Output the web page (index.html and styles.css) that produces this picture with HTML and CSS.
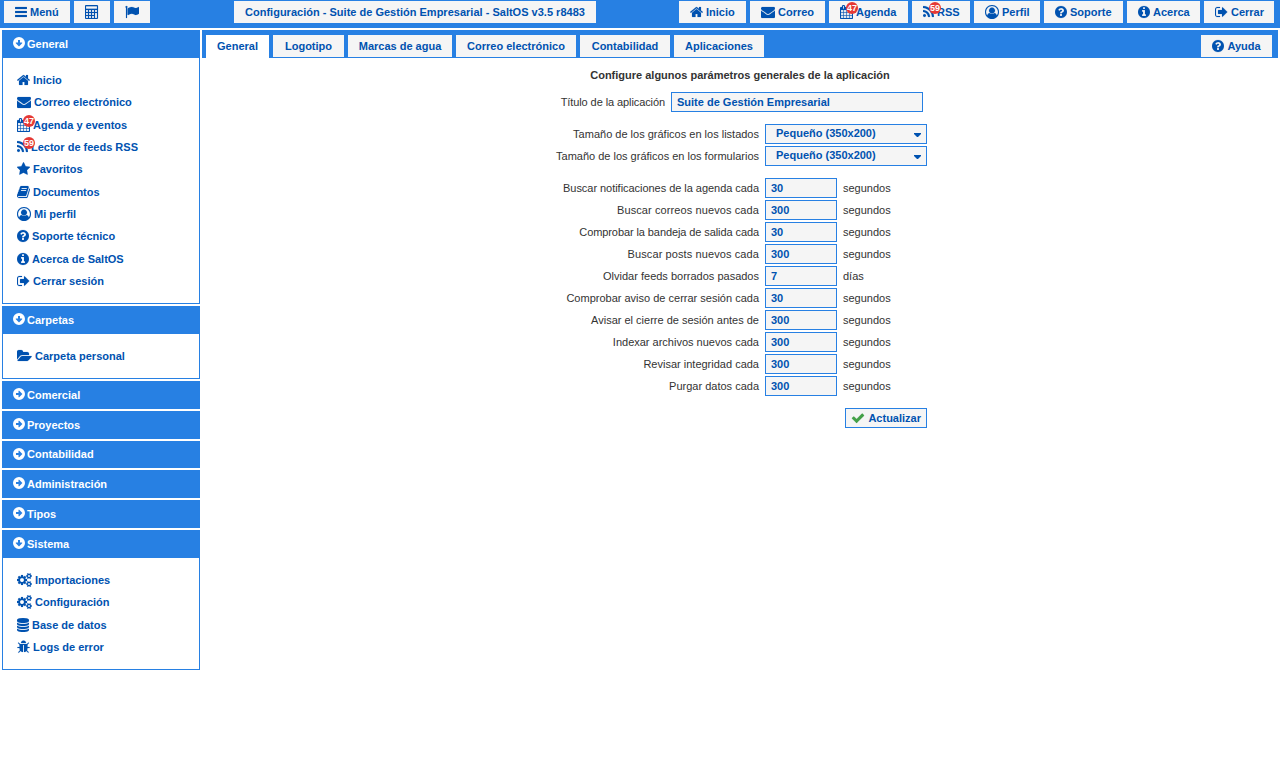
FILE: index.html
```html
<!DOCTYPE html>
<html lang="es">
<head>
<meta charset="utf-8">
<title>Configuración - Suite de Gestión Empresarial - SaltOS</title>
<link rel="stylesheet" href="styles.css">
</head>
<body>
<svg class="defs" width="0" height="0" aria-hidden="true">
<symbol id="bars" viewBox="128 0 1536 1792"><path d="M1664 1344v128q0 26-19 45t-45 19h-1408q-26 0-45-19t-19-45v-128q0-26 19-45t45-19h1408q26 0 45 19t19 45zm0-512v128q0 26-19 45t-45 19h-1408q-26 0-45-19t-19-45v-128q0-26 19-45t45-19h1408q26 0 45 19t19 45zm0-512v128q0 26-19 45t-45 19h-1408q-26 0-45-19t-19-45v-128q0-26 19-45t45-19h1408q26 0 45 19t19 45z"/></symbol>
<symbol id="calc" viewBox="0 0 1792 1792"><path fill-rule="evenodd" d="M128 0h1408q128 0 128 128v1536q0 128-128 128h-1408q-128 0-128-128v-1536q0-128 128-128zM128 160v320h1408v-320zM128 640h256v256h-256zM512 640h256v256h-256zM896 640h256v256h-256zM1280 640h256v256h-256zM128 1024h256v256h-256zM512 1024h256v256h-256zM896 1024h256v256h-256zM1280 1024h256v640h-256zM128 1408h256v256h-256zM512 1408h256v256h-256zM896 1408h256v256h-256z"/></symbol>
<symbol id="flag" viewBox="0 0 1792 1792"><path d="M320 256q0 72-64 110v1266q0 13-9.500 22.500t-22.500 9.500h-64q-13 0-22.500-9.500t-9.500-22.500v-1266q-64-38-64-110 0-53 37.500-90.500t90.500-37.500 90.500 37.500 37.500 90.500zm1472 64v763q0 25-12.500 38.500t-39.500 27.500q-215 116-369 116-61 0-123.500-22t-108.500-48-115.500-48-142.500-22q-192 0-464 146-17 9-33 9-26 0-45-19t-19-45v-742q0-32 31-55 21-14 79-43 236-120 421-120 107 0 200 29t219 88q38 19 88 19 54 0 117.500-21t110-47 88-47 54.500-21q26 0 45 19t19 45z"/></symbol>
<symbol id="home" viewBox="64 0 1664 1792"><path d="M1472 992v480q0 26-19 45t-45 19h-384v-384h-256v384h-384q-26 0-45-19t-19-45v-480q0-1 .5-3t.5-3l575-474 575 474q1 2 1 6zm223-69l-62 74q-8 9-21 11h-3q-13 0-21-7l-692-577-692 577q-12 8-24 7-13-2-21-11l-62-74q-8-10-7-23.500t11-21.500l719-599q32-26 76-26t76 26l244 204v-195q0-14 9-23t23-9h192q14 0 23 9t9 23v408l219 182q10 8 11 21.500t-7 23.500z"/></symbol>
<symbol id="mail" viewBox="0 0 1792 1792"><path d="M1792 710v794q0 66-47 113t-113 47h-1472q-66 0-113-47t-47-113v-794q44 49 101 87 362 246 497 345 57 42 92.500 65.500t94.500 48 110 24.500h2q51 0 110-24.500t94.500-48 92.500-65.500q170-123 498-345 57-39 100-87zm0-294q0 79-49 151t-122 123q-376 261-468 325-10 7-42.500 31t-54 38.500-52 32.500-57.500 27-50 9h-2q-23 0-50-9t-57.500-27-52-32.500-54-38.500-42.500-31q-91-64-262-182.500t-205-142.500q-62-42-117-115.500t-55-136.500q0-78 41.500-130t118.500-52h1472q65 0 112.500 47t47.500 113z"/></symbol>
<symbol id="cal" viewBox="64 0 1664 1792"><path d="M192 1664h288v-288h-288v288zm352 0h320v-288h-320v288zm-352-352h288v-320h-288v320zm352 0h320v-320h-320v320zm-352-384h288v-288h-288v288zm736 736h320v-288h-320v288zm-384-736h320v-288h-320v288zm768 736h288v-288h-288v288zm-384-352h320v-320h-320v320zm-352-864v-288q0-13-9.500-22.500t-22.500-9.500h-64q-13 0-22.500 9.500t-9.500 22.500v288q0 13 9.500 22.500t22.500 9.500h64q13 0 22.500-9.500t9.500-22.500zm736 864h288v-320h-288v320zm-384-384h320v-288h-320v288zm384 0h288v-288h-288v288zm32-480v-288q0-13-9.500-22.500t-22.500-9.500h-64q-13 0-22.500 9.500t-9.500 22.500v288q0 13 9.500 22.500t22.500 9.500h64q13 0 22.500-9.500t9.500-22.500zm384-64v1280q0 52-38 90t-90 38h-1408q-52 0-90-38t-38-90v-1280q0-52 38-90t90-38h128v-96q0-66 47-113t113-47h64q66 0 113 47t47 113v96h384v-96q0-66 47-113t113-47h64q66 0 113 47t47 113v96h128q52 0 90 38t38 90z"/></symbol>
<symbol id="rss" viewBox="192 0 1408 1792"><path d="M576 1344q0 80-56 136t-136 56-136-56-56-136 56-136 136-56 136 56 56 136zm512 123q2 28-17 48-18 21-47 21h-135q-25 0-43-16.500t-20-41.500q-22-229-184.500-391.500t-391.500-184.500q-25-2-41.500-20t-16.500-43v-135q0-29 21-47 17-17 43-17h5q160 13 306 80.500t259 181.500q114 113 181.500 259t80.500 306zm512 2q2 27-18 47-18 20-46 20h-143q-26 0-44.500-17.500t-19.500-42.500q-12-215-101-408.500t-231.500-336-336-231.500-408.500-102q-25-1-42.500-19.500t-17.500-43.500v-143q0-28 20-46 18-18 44-18h3q262 13 501.500 120t425.500 294q187 186 294 425.500t120 501.500z"/></symbol>
<symbol id="star" viewBox="64 0 1664 1792"><path d="M1728 647q0 22-26 48l-363 354 86 500q1 7 1 20 0 21-10.500 35.500t-30.500 14.500q-19 0-40-12l-449-236-449 236q-22 12-40 12-21 0-31.500-14.500t-10.500-35.500q0-6 2-20l86-500-364-354q-25-27-25-48 0-37 56-46l502-73 225-455q19-41 49-41t49 41l225 455 502 73q56 9 56 46z"/></symbol>
<symbol id="book" viewBox="64 0 1664 1792"><path d="M1703 478q40 57 18 129l-275 906q-19 64-76.500 107.500t-122.500 43.500h-923q-77 0-148.500-53.500t-99.500-131.500q-24-67-2-127 0-4 3-27t4-37q1-8-3-21.500t-3-19.500q2-11 8-21t16.500-23.500 16.500-23.500q23-38 45-91.500t30-91.500q3-10 .5-30t-.5-28q3-11 17-28t17-23q21-36 42-92t25-90q1-9-2.500-32t.5-28q4-13 22-30.500t22-22.500q19-26 42.500-84.500t27.500-96.500q1-8-3-25.500t-2-26.500q2-8 9-18t18-23 17-21q8-12 16.500-30.500t15-35 16-36 19.500-32 26.500-23.500 36-11.500 47.500 5.500l-1 3q38-9 51-9h761q74 0 114 56t18 130l-274 906q-36 119-71.500 153.500t-128.500 34.500h-869q-27 0-38 15-11 16-1 43 24 70 144 70h923q29 0 56-15.500t35-41.500l300-987q7-22 5-57 38 15 59 43zm-1064 2q-4 13 2 22.500t20 9.500h608q13 0 25.500-9.500t16.500-22.500l21-64q4-13-2-22.500t-20-9.500h-608q-13 0-25.500 9.500t-16.500 22.500zm-83 256q-4 13 2 22.500t20 9.500h608q13 0 25.500-9.500t16.500-22.500l21-64q4-13-2-22.500t-20-9.500h-608q-13 0-25.500 9.500t-16.500 22.500z"/></symbol>
<symbol id="user" viewBox="0 0 1792 1792"><path d="M896 0q182 0 348 71t286 191 191 286 71 348q0 181-70.500 347t-190.500 286-286 191.500-349 71.500-349-71-285.500-191.500-190.500-286-71-347.500 71-348 191-286 286-191 348-71zm619 1351q149-205 149-455 0-156-61-298t-164-245-245-164-298-61-298 61-245 164-164 245-61 298q0 250 149 455 66-327 306-327 131 128 313 128t313-128q240 0 306 327zm-235-647q0-159-112.500-271.500t-271.500-112.500-271.500 112.500-112.500 271.500 112.500 271.500 271.500 112.500 271.500-112.500 112.500-271.500z" transform="translate(0 0)" fill-rule="nonzero"/></symbol>
<symbol id="help" viewBox="128 0 1536 1792"><path d="M1024 1376v-192q0-14-9-23t-23-9h-192q-14 0-23 9t-9 23v192q0 14 9 23t23 9h192q14 0 23-9t9-23zm256-672q0-88-55.500-163t-138.500-116-170-41q-243 0-371 213-15 24 8 42l132 100q7 6 19 6 16 0 25-12 53-68 86-92 34-24 86-24 48 0 85.500 26t37.500 59q0 38-20 61t-68 45q-63 28-115.500 86.500t-52.500 125.500v36q0 14 9 23t23 9h192q14 0 23-9t9-23q0-19 21.500-49.500t54.500-49.500q32-18 49-28.500t46-35 44.500-48 28-60.500 12.500-81zm384 192q0 209-103 385.500t-279.500 279.500-385.500 103-385.500-103-279.500-279.500-103-385.500 103-385.500 279.500-279.500 385.500-103 385.500 103 279.500 279.500 103 385.500z"/></symbol>
<symbol id="info" viewBox="128 0 1536 1792"><path d="M1152 1376v-160q0-14-9-23t-23-9h-96v-512q0-14-9-23t-23-9h-320q-14 0-23 9t-9 23v160q0 14 9 23t23 9h96v320h-96q-14 0-23 9t-9 23v160q0 14 9 23t23 9h448q14 0 23-9t9-23zm-128-896v-160q0-14-9-23t-23-9h-192q-14 0-23 9t-9 23v160q0 14 9 23t23 9h192q14 0 23-9t9-23zm640 416q0 209-103 385.500t-279.500 279.500-385.500 103-385.500-103-279.500-279.500-103-385.500 103-385.500 279.500-279.500 385.500-103 385.500 103 279.500 279.500 103 385.500z"/></symbol>
<symbol id="out" viewBox="64 0 1664 1792"><path d="M704 1440q0 4 1 20t.5 26.500-3 23.500-10 19.500-20.500 6.500h-320q-119 0-203.500-84.500t-84.500-203.500v-704q0-119 84.500-203.500t203.500-84.500h320q13 0 22.500 9.500t9.500 22.500q0 4 1 20t.5 26.500-3 23.500-10 19.500-20.500 6.500h-320q-66 0-113 47t-47 113v704q0 66 47 113t113 47h312l11.500 1 11.500 3 8 5.500 7 9 2 13.500zm928-544q0 26-19 45l-544 544q-19 19-45 19t-45-19-19-45v-288h-448q-26 0-45-19t-19-45v-384q0-26 19-45t45-19h448v-288q0-26 19-45t45-19 45 19l544 544q19 19 19 45z"/></symbol>
<symbol id="folder" viewBox="0 0 1920 1792"><path d="M1879 952q0 31-31 66l-336 396q-43 51-120.500 86.500t-143.500 35.500h-1088q-34 0-60.500-13t-26.500-43q0-31 31-66l336-396q43-51 120.500-86.500t143.500-35.500h1088q34 0 60.500 13t26.500 43zm-343-344v160h-832q-94 0-197 47.500t-164 119.500l-337 396-5 6q0-4-.5-12.500t-.5-12.500v-960q0-92 66-158t158-66h320q92 0 158 66t66 158v32h544q92 0 158 66t66 158z"/></symbol>
<symbol id="cogs" viewBox="0 0 1920 1792"><path d="M896 896q0-106-75-181t-181-75-181 75-75 181 75 181 181 75 181-75 75-181zm768 512q0-52-38-90t-90-38-90 38-38 90q0 53 37.500 90.500t90.500 37.500 90.500-37.500 37.500-90.500zm0-1024q0-52-38-90t-90-38-90 38-38 90q0 53 37.500 90.500t90.500 37.500 90.500-37.500 37.500-90.500zm-384 421v185q0 10-7 19.500t-16 10.500l-155 24q-11 35-32 76 34 48 90 115 7 10 7 20 0 12-7 19-23 30-82.500 89.500t-78.500 59.500q-11 0-21-7l-115-90q-37 19-77 31-11 108-23 155-7 24-30 24h-186q-11 0-20-7.500t-10-17.500l-23-153q-34-10-75-31l-118 89q-7 7-20 7-11 0-21-8-144-133-144-160 0-9 7-19 10-14 41-53t47-61q-23-44-35-82l-152-24q-10-1-17-9.500t-7-19.500v-185q0-10 7-19.500t16-10.500l155-24q11-35 32-76-34-48-90-115-7-11-7-20 0-12 7-20 22-30 82-89t79-59q11 0 21 7l115 90q34-18 77-32 11-108 23-154 7-24 30-24h186q11 0 20 7.500t10 17.500l23 153q34 10 75 31l118-89q8-7 20-7 11 0 21 8 144 133 144 160 0 9-7 19-12 16-42 54t-45 60q23 48 34 82l152 23q10 2 17 10.500t7 19.500zm640 533v140q0 16-149 31-12 27-30 52 51 113 51 138 0 4-4 7-122 71-124 71-8 0-46-47t-52-68q-20 2-30 2t-30-2q-14 21-52 68t-46 47q-2 0-124-71-4-3-4-7 0-25 51-138-18-25-30-52-149-15-149-31v-140q0-16 149-31 13-29 30-52-51-113-51-138 0-4 4-7 4-2 35-20t59-34 30-16q8 0 46 46.500t52 67.500q20-2 30-2t30 2q51-71 92-112l6-2q4 0 124 70 4 3 4 7 0 25-51 138 17 23 30 52 149 15 149 31zm0-1024v140q0 16-149 31-12 27-30 52 51 113 51 138 0 4-4 7-122 71-124 71-8 0-46-47t-52-68q-20 2-30 2t-30-2q-14 21-52 68t-46 47q-2 0-124-71-4-3-4-7 0-25 51-138-18-25-30-52-149-15-149-31v-140q0-16 149-31 13-29 30-52-51-113-51-138 0-4 4-7 4-2 35-20t59-34 30-16q8 0 46 46.500t52 67.500q20-2 30-2t30 2q51-71 92-112l6-2q4 0 124 70 4 3 4 7 0 25-51 138 17 23 30 52 149 15 149 31z"/></symbol>
<symbol id="db" viewBox="128 0 1536 1792"><path d="M896 768q237 0 443-43t325-127v170q0 69-103 128t-280 93.500-385 34.500-385-34.500-280-93.500-103-128v-170q119 84 325 127t443 43zm0 768q237 0 443-43t325-127v170q0 69-103 128t-280 93.500-385 34.500-385-34.500-280-93.500-103-128v-170q119 84 325 127t443 43zm0-384q237 0 443-43t325-127v170q0 69-103 128t-280 93.500-385 34.500-385-34.500-280-93.500-103-128v-170q119 84 325 127t443 43zm0-1152q208 0 385 34.500t280 93.500 103 128v128q0 69-103 128t-280 93.500-385 34.500-385-34.500-280-93.500-103-128v-128q0-69 103-128t280-93.500 385-34.500z"/></symbol>
<symbol id="bug" viewBox="64 0 1664 1792"><path d="M1696 960q0 26-19 45t-45 19h-224q0 171-67 290l208 209q19 19 19 45t-19 45q-18 19-45 19t-45-19l-198-197q-5 5-15 13t-42 28.500-65 36.500-82 29-97 13v-896h-128v896q-51 0-101.500-13.500t-87-33-66-39-43.500-32.500l-15-14-183 207q-20 21-48 21-24 0-43-16-19-18-20.500-44.500t15.500-46.500l202-227q-58-114-58-274h-224q-26 0-45-19t-19-45 19-45 45-19h224v-294l-173-173q-19-19-19-45t19-45 45-19 45 19l173 173h844l173-173q19-19 45-19t45 19 19 45-19 45l-173 173v294h224q26 0 45 19t19 45zm-480-576h-640q0-133 93.500-226.500t226.500-93.500 226.500 93.500 93.500 226.500z"/></symbol>
<symbol id="check" viewBox="0 0 1792 1792"><path d="M1671 566q0 40-28 68l-724 724-136 136q-28 28-68 28t-68-28l-136-136-362-362q-28-28-28-68t28-68l136-136q28-28 68-28t68 28l294 295 656-657q28-28 68-28t68 28l136 136q28 28 28 68z"/></symbol>
<symbol id="down" viewBox="0 0 12 12"><path fill-rule="evenodd" d="M6 0a6 6 0 1 0 0 12a6 6 0 1 0 0-12zM5 3h2v2.500h2.200v.7l-3.200 3.200l-3.200-3.200v-.7h2.200z"/></symbol>
<symbol id="right" viewBox="0 0 12 12"><path fill-rule="evenodd" d="M6 0a6 6 0 1 0 0 12a6 6 0 1 0 0-12zM3 5h2.500v-2.200h.7l3.200 3.200l-3.200 3.200h-.7v-2.200h-2.500z"/></symbol>
</svg>

<header class="topbar">
  <div class="group">
    <a class="btn"><svg class="i w12"><use href="#bars"/></svg>Menú</a>
    <a class="btn only"><svg class="i w14"><use href="#calc"/></svg></a>
    <a class="btn only"><svg class="i w14"><use href="#flag"/></svg></a>
  </div>
  <div class="btn title">Configuración - Suite de Gestión Empresarial - SaltOS v3.5 r8483</div>
  <nav class="nav">
    <a class="btn"><svg class="i w13"><use href="#home"/></svg>Inicio</a>
    <a class="btn"><svg class="i w14"><use href="#mail"/></svg>Correo</a>
    <a class="btn"><svg class="i w13"><use href="#cal"/></svg>Agenda<span class="badge">47</span></a>
    <a class="btn"><svg class="i w11"><use href="#rss"/></svg>RSS<span class="badge">59</span></a>
    <a class="btn"><svg class="i w14"><use href="#user"/></svg>Perfil</a>
    <a class="btn"><svg class="i w12"><use href="#help"/></svg>Soporte</a>
    <a class="btn"><svg class="i w12"><use href="#info"/></svg>Acerca</a>
    <a class="btn"><svg class="i w13"><use href="#out"/></svg>Cerrar</a>
  </nav>
</header>

<div class="layout">
  <aside class="sidebar">
    <section>
      <h3><svg class="t"><use href="#down"/></svg>General</h3>
      <ul>
        <li><svg class="i w13"><use href="#home"/></svg>Inicio</li>
        <li><svg class="i w14"><use href="#mail"/></svg>Correo electrónico</li>
        <li><svg class="i w13"><use href="#cal"/></svg>Agenda y eventos<span class="badge">47</span></li>
        <li><svg class="i w11"><use href="#rss"/></svg>Lector de feeds RSS<span class="badge">59</span></li>
        <li><svg class="i w13"><use href="#star"/></svg>Favoritos</li>
        <li><svg class="i w13"><use href="#book"/></svg>Documentos</li>
        <li><svg class="i w14"><use href="#user"/></svg>Mi perfil</li>
        <li><svg class="i w12"><use href="#help"/></svg>Soporte técnico</li>
        <li><svg class="i w12"><use href="#info"/></svg>Acerca de SaltOS</li>
        <li><svg class="i w13"><use href="#out"/></svg>Cerrar sesión</li>
      </ul>
    </section>
    <section>
      <h3><svg class="t"><use href="#down"/></svg>Carpetas</h3>
      <ul>
        <li><svg class="i w15"><use href="#folder"/></svg>Carpeta personal</li>
      </ul>
    </section>
    <section><h3><svg class="t"><use href="#right"/></svg>Comercial</h3></section>
    <section><h3><svg class="t"><use href="#right"/></svg>Proyectos</h3></section>
    <section><h3><svg class="t"><use href="#right"/></svg>Contabilidad</h3></section>
    <section><h3><svg class="t"><use href="#right"/></svg>Administración</h3></section>
    <section><h3><svg class="t"><use href="#right"/></svg>Tipos</h3></section>
    <section>
      <h3><svg class="t"><use href="#down"/></svg>Sistema</h3>
      <ul>
        <li><svg class="i w15"><use href="#cogs"/></svg>Importaciones</li>
        <li><svg class="i w15"><use href="#cogs"/></svg>Configuración</li>
        <li><svg class="i w12"><use href="#db"/></svg>Base de datos</li>
        <li><svg class="i w13"><use href="#bug"/></svg>Logs de error</li>
      </ul>
    </section>
  </aside>

  <main class="main">
    <div class="tabs">
      <a class="tab active">General</a>
      <a class="tab">Logotipo</a>
      <a class="tab">Marcas de agua</a>
      <a class="tab">Correo electrónico</a>
      <a class="tab">Contabilidad</a>
      <a class="tab">Aplicaciones</a>
      <a class="tab help"><svg class="i w12"><use href="#help"/></svg>Ayuda</a>
    </div>
    <form class="form">
      <h2>Configure algunos parámetros generales de la aplicación</h2>
      <div class="row wide"><label class="tight">Título de la aplicación</label><div class="field">Suite de Gestión Empresarial</div></div>
      <div class="block">
        <div class="row"><label>Tamaño de los gráficos en los listados</label><div class="field select">Pequeño (350x200)<svg class="caret" viewBox="0 0 7 4"><path d="M0 0h7v1l-3 3h-1l-3-3z"/></svg></div></div>
        <div class="row"><label>Tamaño de los gráficos en los formularios</label><div class="field select">Pequeño (350x200)<svg class="caret" viewBox="0 0 7 4"><path d="M0 0h7v1l-3 3h-1l-3-3z"/></svg></div></div>
      </div>
      <div class="block">
        <div class="row"><label class="snug">Buscar notificaciones de la agenda cada</label><div class="field">30</div><span>segundos</span></div>
        <div class="row"><label class="loose">Buscar correos nuevos cada</label><div class="field">300</div><span>segundos</span></div>
        <div class="row"><label class="tight">Comprobar la bandeja de salida cada</label><div class="field">30</div><span>segundos</span></div>
        <div class="row"><label class="loose">Buscar posts nuevos cada</label><div class="field">300</div><span>segundos</span></div>
        <div class="row"><label>Olvidar feeds borrados pasados</label><div class="field">7</div><span>días</span></div>
        <div class="row"><label>Comprobar aviso de cerrar sesión cada</label><div class="field">30</div><span>segundos</span></div>
        <div class="row"><label>Avisar el cierre de sesión antes de</label><div class="field">300</div><span>segundos</span></div>
        <div class="row"><label>Indexar archivos nuevos cada</label><div class="field">300</div><span>segundos</span></div>
        <div class="row"><label>Revisar integridad cada</label><div class="field">300</div><span>segundos</span></div>
        <div class="row"><label>Purgar datos cada</label><div class="field">300</div><span>segundos</span></div>
      </div>
      <div class="actions"><div class="submit"><svg class="i w14 ok"><use href="#check"/></svg>Actualizar</div></div>
    </form>
  </main>
</div>
</body>
</html>
```
FILE: styles.css
```css
* { box-sizing: border-box; }
body {
  margin: 0;
  background: #fff;
  color: #333;
  font: 11px/14px "Liberation Sans", Arial, sans-serif;
}
.defs { position: absolute; }

.i { display: block; flex: none; height: 14px; margin-right: 3px; fill: #0052b0; stroke: #0052b0; stroke-width: 20px; }
.w11 { width: 11px; }
.w12 { width: 12px; }
.w13 { width: 13px; }
.w14 { width: 14px; }
.w15 { width: 15px; }

.topbar {
  display: grid;
  grid-template-columns: 230px 362px 1fr;
  height: 28px;
  padding: 1px 6px 5px 4px;
  background: #2780e3;
}
.group { display: flex; gap: 4px; }
.nav {
  display: grid;
  grid-template-columns: 67px 75px 79px 58px 66px 79px 73px 70px;
  gap: 4px;
  justify-content: end;
}
.btn {
  position: relative;
  display: flex;
  align-items: center;
  height: 22px;
  padding: 0 11px;
  background: #f5f5f5;
  color: #0052b0;
  font-weight: bold;
  white-space: nowrap;
}
.title { letter-spacing: 0.01px; }
.only .i { margin-right: 0; }

.badge {
  position: absolute;
  left: 17px;
  top: 1px;
  width: 12px;
  height: 12px;
  border-radius: 50%;
  background: #e53935;
  color: #fff;
  font-size: 9px;
  line-height: 12px;
  text-align: center;
}

.layout { display: flex; gap: 2px; padding: 2px 2px 0; }

.sidebar { width: 198px; flex: none; }
.sidebar section { margin-bottom: 2px; }
.sidebar h3 {
  display: flex;
  align-items: center;
  gap: 2px;
  height: 27.8px;
  margin: 0;
  padding-left: 11px;
  background: #2780e3;
  color: #fff;
  font-size: 11px;
}
.t { display: block; width: 12px; height: 12px; margin-bottom: 1.6px; fill: #fff; }
.sidebar ul {
  margin: 0;
  padding: 11.1px 0 10.77px 14px;
  border: 1px solid #2780e3;
  border-top: 0;
  list-style: none;
}
.sidebar li {
  position: relative;
  display: flex;
  align-items: center;
  height: 22.33px;
  color: #0052b0;
  font-weight: bold;
}
.sidebar .badge { left: 6px; top: 1px; }

.main { flex: 1; }
.tabs {
  display: grid;
  grid-template-columns: 63px 71px 104px 120px 90px 90px 1fr;
  gap: 4px;
  height: 28px;
  padding: 5px 6px 0 4px;
  background: #2780e3;
}
.tab {
  display: flex;
  align-items: center;
  justify-content: center;
  height: 22px;
  background: #f5f5f5;
  color: #0052b0;
  font-weight: bold;
}
.tab.active { height: 23px; padding-bottom: 1px; background: #fff; }
.tab.help { width: 71px; justify-self: end; }

.form { width: 374px; margin: 0 auto; }
.form h2 { margin: 10px 0; font-size: 11px; line-height: 14px; text-align: center; }
.row { display: grid; grid-template-columns: 206px 72px auto; column-gap: 6px; height: 20px; line-height: 20px; }
.row label { text-align: right; white-space: nowrap; }
.row .tight { letter-spacing: -0.09px; }
.row .snug { letter-spacing: -0.04px; }
.row .loose { letter-spacing: 0.1px; }
.row.wide { grid-template-columns: 112px 252px; }
.block { display: grid; gap: 2px; margin-top: 12px; }
.field {
  height: 20px;
  padding-left: 5px;
  border: 1px solid #2780e3;
  background: #f5f5f5;
  color: #0052b0;
  font-weight: bold;
  line-height: 18px;
}
.select {
  display: flex;
  justify-content: space-between;
  align-items: center;
  width: 162px;
  padding: 0 5px 2px 10px;
  line-height: 16px;
}
.caret { width: 7px; height: 4px; margin-top: 4px; fill: #0052b0; }
.actions { display: flex; justify-content: flex-end; margin-top: 12px; }
.submit {
  display: flex;
  align-items: center;
  height: 20px;
  padding: 0 5px;
  border: 1px solid #2780e3;
  background: #f5f5f5;
  color: #0052b0;
  font-weight: bold;
}
.ok { fill: #43a047; stroke: #43a047; }
```
